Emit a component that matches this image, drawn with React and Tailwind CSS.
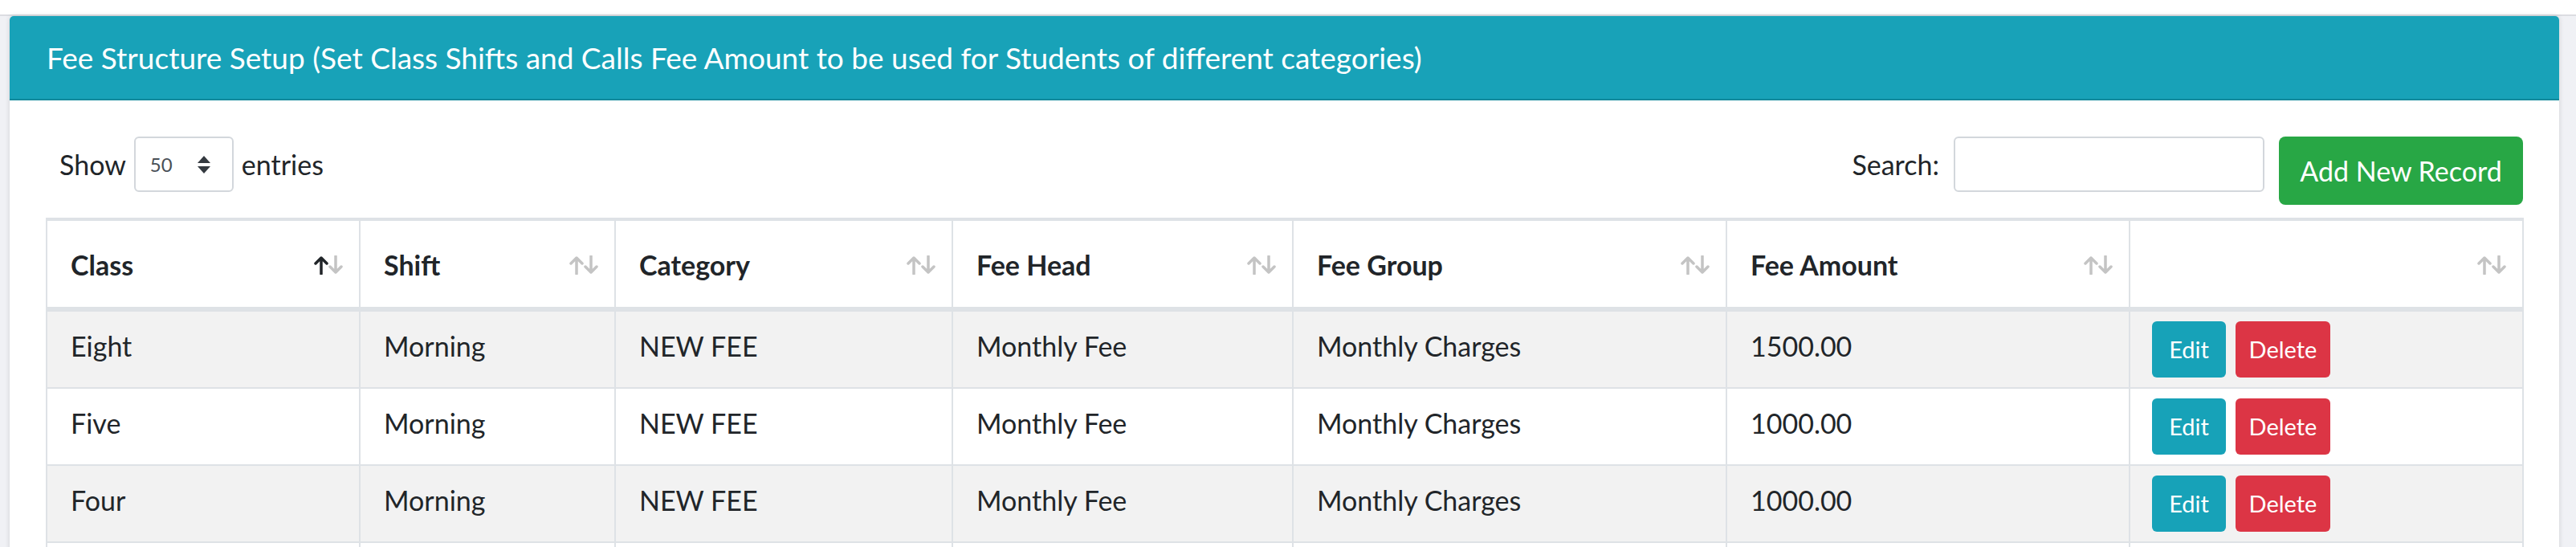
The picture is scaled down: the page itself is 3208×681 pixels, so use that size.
import React from 'react';

const columns = [
  { key: 'cls', label: 'Class', width: 'w-[390px]', active: true },
  { key: 'shift', label: 'Shift', width: 'w-[318px]' },
  { key: 'category', label: 'Category', width: 'w-[420px]' },
  { key: 'head', label: 'Fee Head', width: 'w-[424px]' },
  { key: 'group', label: 'Fee Group', width: 'w-[540px]' },
  { key: 'amount', label: 'Fee Amount', width: 'w-[502px]' },
  { key: 'actions', label: '', width: 'w-[490px]' },
];

const rows = [
  { id: 1, cls: 'Eight', shift: 'Morning', category: 'NEW FEE', head: 'Monthly Fee', group: 'Monthly Charges', amount: '1500.00' },
  { id: 2, cls: 'Five', shift: 'Morning', category: 'NEW FEE', head: 'Monthly Fee', group: 'Monthly Charges', amount: '1000.00' },
  { id: 3, cls: 'Four', shift: 'Morning', category: 'NEW FEE', head: 'Monthly Fee', group: 'Monthly Charges', amount: '1000.00' },
];

const fields = ['cls', 'shift', 'category', 'head', 'group', 'amount'];

const SortIcon = ({ active }) => (
  <svg width="40" height="24" viewBox="0 0 40 24" fill="none" strokeWidth="3.5" strokeLinecap="round" strokeLinejoin="round">
    <path d="M11 23V3M4 10l7-7 7 7" stroke={active ? '#212529' : '#c4c4c4'} />
    <path d="M29 1v20M22 14l7 7 7-7" stroke="#c4c4c4" />
  </svg>
);

const SelectArrows = () => (
  <svg width="22" height="24" viewBox="0 0 22 24">
    <path d="M11 1L19 10H3Z" fill="#343a40" />
    <path d="M11 23L19 14H3Z" fill="#343a40" />
  </svg>
);

const App = () => {
  return (
    <div className="min-h-[681px] bg-[#f0f1f5] font-['Lato',sans-serif] text-[#212529]">
      <div className="h-[20px] bg-white border-b-2 border-[#dcdde2]" />
      <div className="pl-[12px] pr-[21px]">
        <div className="rounded-[5px] bg-white shadow-[0_0_6px_rgba(0,0,0,0.14)] overflow-hidden">
          <div className="h-[105px] bg-[#18a2b8] border-b-2 border-[#12899b] flex items-center px-[46px]">
            <h1 className="text-[37px] leading-[52px] text-white">
              Fee Structure Setup (Set Class Shifts and Calls Fee Amount to be used for Students of different categories)
            </h1>
          </div>

          <div className="px-[45px] pt-[45px]">
            <div className="flex items-start justify-between mb-[16px]">
              <div className="flex items-center h-[69px] pl-[17px] gap-[10px] text-[34px] leading-[51px]">
                <span>Show</span>
                <div className="w-[124px] h-[69px] border-2 border-[#d3d7dc] rounded-[6px] flex items-center justify-between pl-[18px] pr-[24px]">
                  <span className="text-[24px] text-[#495057]">50</span>
                  <SelectArrows />
                </div>
                <span>entries</span>
              </div>

              <div className="flex items-start gap-[18px]">
                <div className="flex items-center h-[69px] gap-[18px] text-[34px] leading-[51px]">
                  <span>Search:</span>
                  <div className="w-[387px] h-[69px] border-2 border-[#d3d7dc] rounded-[6px] bg-white" />
                </div>
                <button className="w-[304px] h-[85px] rounded-[8px] bg-[#28a745] text-white text-[34px] leading-[51px]">
                  Add New Record
                </button>
              </div>
            </div>

            <table className="border-collapse table-fixed w-[3085px]">
              <thead>
                <tr>
                  {columns.map((c) => (
                    <th
                      key={c.key}
                      className={`${c.width} border-2 border-t-[4px] border-b-[6px] border-[#dee2e6] pl-[29px] pr-[18px] pt-[29px] pb-[27px] text-left font-bold text-[34px] leading-[51px]`}
                    >
                      <div className="flex items-center justify-between">
                        <span>{c.label}</span>
                        <SortIcon active={c.active} />
                      </div>
                    </th>
                  ))}
                </tr>
              </thead>
              <tbody>
                {rows.map((r, i) => (
                  <tr key={r.id} className={i % 2 === 0 ? 'bg-[#f2f2f2]' : 'bg-white'}>
                    {fields.map((k) => (
                      <td
                        key={k}
                        className="border-2 border-[#dee2e6] align-top pl-[29px] pr-[20px] pt-[17px] pb-[12px] text-[34px] leading-[51px]"
                      >
                        {r[k]}
                      </td>
                    ))}
                    <td className="border-2 border-[#dee2e6] align-top pl-[27px] pt-[12px] pb-[12px]">
                      <div className="flex gap-[12px]">
                        <button className="w-[92px] h-[70px] rounded-[6px] bg-[#17a2b8] text-white text-[29px]">Edit</button>
                        <button className="w-[118px] h-[70px] rounded-[6px] bg-[#dc3545] text-white text-[29px]">Delete</button>
                      </div>
                    </td>
                  </tr>
                ))}
                <tr className="bg-white">
                  {columns.map((c) => (
                    <td key={c.key} className="border-2 border-[#dee2e6] h-[94px]" />
                  ))}
                </tr>
              </tbody>
            </table>
          </div>
        </div>
      </div>
    </div>
  );
};

export default App;
